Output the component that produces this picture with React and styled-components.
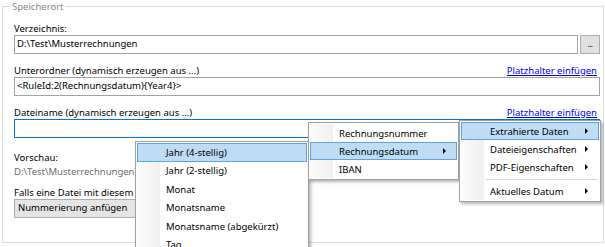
import React from "react";
import styled, { createGlobalStyle } from "styled-components";

const Global = createGlobalStyle`
  html, body { margin: 0; padding: 0; background: #fff; }
  body { font-family: "Noto Sans", "Open Sans", sans-serif; font-size: 9.5px; color: #000; }
  * { box-sizing: border-box; }
`;

const Page = styled.div`
  position: relative;
  width: 605px;
  height: 247px;
  overflow: hidden;
  background: #fff;
  padding-top: 6px;
`;

const Group = styled.div`
  position: relative;
  margin-left: 2px;
  width: 602px;
  height: 237px;
  border: 1px solid #dcdcdc;
  padding: 0 3px 0 11px;
  display: flex;
  flex-direction: column;
`;

const Legend = styled.span`
  position: absolute;
  top: -7px;
  left: 8px;
  padding: 0 1px;
  background: #fff;
  color: #8a8a8a;
  line-height: 13px;
`;

const Field = styled.div`
  margin-top: ${(p) => p.$top}px;
  display: flex;
  flex-direction: column;
`;

const LabelRow = styled.div`
  display: flex;
  justify-content: space-between;
  align-items: flex-end;
  height: ${(p) => p.$h || 14}px;
  line-height: 13px;
  padding-right: 3px;
`;

const Label = styled.span`
  color: ${(p) => (p.$muted ? "#6d6d6d" : "#000")};
  white-space: nowrap;
`;

const Link = styled.a`
  color: #0000ff;
  text-decoration: underline;
  cursor: pointer;
`;

const InputRow = styled.div`
  display: flex;
  gap: 2px;
`;

const TextBox = styled.div`
  flex: 1;
  height: 19px;
  border: 1px solid ${(p) => (p.$focused ? "#0078d7" : "#a3a3a3")};
  background: #fff;
  padding: 0 2px;
  line-height: 16px;
  white-space: nowrap;
  overflow: hidden;
`;

const DotsButton = styled.div`
  width: 20px;
  height: 19px;
  border: 1px solid #adadad;
  background: #e1e1e1;
  display: flex;
  align-items: center;
  justify-content: center;
  font-size: 8px;
  line-height: 8px;
  padding-bottom: 2px;
  letter-spacing: -0.5px;
`;

const Combo = styled.div`
  width: 200px;
  height: 19px;
  border: 1px solid #adadad;
  background: #e5e5e5;
  padding: 0 3px;
  line-height: 16px;
  white-space: nowrap;
`;

const Menu = styled.div`
  position: absolute;
  left: ${(p) => p.$x}px;
  top: ${(p) => p.$y}px;
  width: ${(p) => p.$w}px;
  height: ${(p) => (p.$h ? `${p.$h}px` : "auto")};
  z-index: ${(p) => p.$z};
  background: #fff;
  border: 1px solid #a0a0a0;
  padding: 1px;
  box-shadow: 2px 2px 3px rgba(0, 0, 0, 0.3);
  display: flex;
  flex-direction: column;
  &::before {
    content: "";
    position: absolute;
    left: 1px;
    top: 1px;
    bottom: 1px;
    width: 23px;
    background: linear-gradient(to right, #fcfcfc, #f0f0f0);
  }
`;

const Item = styled.div`
  position: relative;
  height: ${(p) => p.$h || 18}px;
  flex: none;
  display: flex;
  align-items: center;
  padding-left: 28px;
  padding-right: 10px;
  white-space: nowrap;
  border: 1px solid ${(p) => (p.$active ? "#62a2e4" : "transparent")};
  background: ${(p) => (p.$active ? "#bfdcf5" : "transparent")};
  line-height: 13px;
`;

const ItemText = styled.span`
  flex: 1;
`;

const Arrow = styled.span`
  width: 0;
  height: 0;
  border-left: 3px solid #000;
  border-top: 3px solid transparent;
  border-bottom: 3px solid transparent;
`;

const Separator = styled.div`
  position: relative;
  height: 6px;
  margin-left: 25px;
  margin-right: 1px;
  display: flex;
  align-items: center;
  &::after {
    content: "";
    flex: 1;
    height: 1px;
    background: #d7d7d7;
  }
`;

const datumItems = [
  "Jahr (4-stellig)",
  "Jahr (2-stellig)",
  "Monat",
  "Monatsname",
  "Monatsname (abgekürzt)",
  "Tag",
];

export default function App() {
  return (
    <>
      <Global />
      <Page>
        <Group>
          <Legend>Speicherort</Legend>
          <Field $top={14}>
            <LabelRow>
              <Label>Verzeichnis:</Label>
            </LabelRow>
            <InputRow>
              <TextBox>D:\Test\Musterrechnungen</TextBox>
              <DotsButton>...</DotsButton>
            </InputRow>
          </Field>
          <Field $top={9}>
            <LabelRow>
              <Label>Unterordner (dynamisch erzeugen aus ...)</Label>
              <Link>Platzhalter einfügen</Link>
            </LabelRow>
            <InputRow>
              <TextBox>&lt;RuleId:2(Rechnungsdatum){"{"}Year4{"}"}&gt;</TextBox>
            </InputRow>
          </Field>
          <Field $top={9}>
            <LabelRow>
              <Label>Dateiname (dynamisch erzeugen aus ...)</Label>
              <Link>Platzhalter einfügen</Link>
            </LabelRow>
            <InputRow>
              <TextBox $focused />
            </InputRow>
          </Field>
          <Field $top={10}>
            <LabelRow $h={16}>
              <Label>Vorschau:</Label>
            </LabelRow>
            <LabelRow $h={14}>
              <Label $muted>D:\Test\Musterrechnungen\2023\</Label>
            </LabelRow>
          </Field>
          <Field $top={8}>
            <LabelRow $h={13}>
              <Label>Falls eine Datei mit diesem Namen bereits existiert:</Label>
            </LabelRow>
            <Combo>Nummerierung anfügen</Combo>
          </Field>
        </Group>

        <Menu $x={135} $y={141} $w={174} $h={130} $z={1}>
          {datumItems.map((t, i) => (
            <Item key={t} $h={18.5} $active={i === 0}>
              <ItemText>{t}</ItemText>
            </Item>
          ))}
        </Menu>

        <Menu $x={308} $y={122} $w={151} $z={2}>
          <Item>
            <ItemText>Rechnungsnummer</ItemText>
          </Item>
          <Item $active>
            <ItemText>Rechnungsdatum</ItemText>
            <Arrow />
          </Item>
          <Item>
            <ItemText>IBAN</ItemText>
          </Item>
        </Menu>

        <Menu $x={459} $y={120} $w={142} $z={3}>
          <Item $active>
            <ItemText>Extrahierte Daten</ItemText>
            <Arrow />
          </Item>
          <Item>
            <ItemText>Dateieigenschaften</ItemText>
            <Arrow />
          </Item>
          <Item>
            <ItemText>PDF-Eigenschaften</ItemText>
            <Arrow />
          </Item>
          <Separator />
          <Item>
            <ItemText>Aktuelles Datum</ItemText>
            <Arrow />
          </Item>
        </Menu>
      </Page>
    </>
  );
}
